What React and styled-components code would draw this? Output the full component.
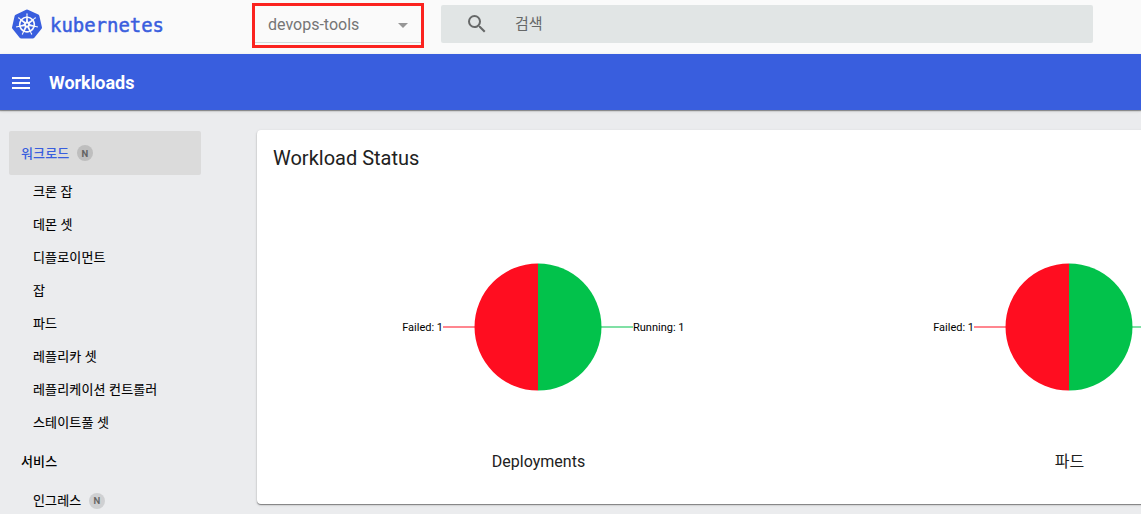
import React from 'react';
import styled, { createGlobalStyle } from 'styled-components';
import { SiKubernetes } from 'react-icons/si';
import { MdSearch, MdMenu, MdArrowDropDown } from 'react-icons/md';

const GlobalStyle = createGlobalStyle`
  * {
    box-sizing: border-box;
  }
  body {
    margin: 0;
    overflow: hidden;
    background: #ebecee;
    color: #000000;
    font-family: Roboto, "Noto Sans CJK KR", sans-serif;
  }
`;

const Page = styled.div`
  height: 514px;
  overflow: hidden;
`;

const Header = styled.header`
  display: flex;
  height: 54px;
  background: #fafafa;
`;

const Brand = styled.div`
  display: flex;
  width: 252px;
  padding: 9px 0 0 12px;
  color: #395ede;
`;

const Wordmark = styled.svg`
  width: 120px;
  height: 30px;
  margin-left: 8px;
  fill: #395ede;
  stroke: #395ede;
  stroke-width: 0.5px;
  font-family: "DejaVu Sans Mono", monospace;
  font-size: 19.5px;
`;

const Namespace = styled.div`
  display: flex;
  align-items: center;
  justify-content: space-between;
  width: 172px;
  height: 45px;
  margin-top: 3px;
  padding: 0 6px 2px 13px;
  border: 3px solid #fb231f;
  box-shadow: inset 0 -2px 0 #fafafa, inset 0 -3px 0 #d3dbdb;
  color: #757575;
  font-size: 16px;
`;

const Search = styled.div`
  display: flex;
  align-items: center;
  width: 652px;
  height: 38px;
  margin: 5px 0 0 17px;
  padding-left: 24px;
  border-radius: 2px;
  background: #e1e5e5;
  color: #666868;
  font-size: 15px;
`;

const Placeholder = styled.span`
  margin: 0 0 3px 26px;
`;

const ActionBar = styled.div`
  position: relative;
  display: flex;
  align-items: center;
  height: 56px;
  padding: 2px 0 0 9px;
  background: #395ede;
  box-shadow: 0 1px 1px rgba(0, 0, 0, 0.35), 0 1px 3px rgba(0, 0, 0, 0.15);
  color: #ffffff;
`;

const PageTitle = styled.h1`
  margin: 0 0 2px 16px;
  font-size: 18px;
  font-weight: 700;
  letter-spacing: -0.05px;
`;

const Body = styled.div`
  display: flex;
  align-items: flex-start;
`;

const Nav = styled.nav`
  flex: none;
  width: 257px;
  padding: 21px 0 0 9px;
  font-size: 13px;
  letter-spacing: 0.15px;
`;

const NavGroup = styled.div`
  display: flex;
  align-items: center;
  width: 192px;
  height: ${props => props.$active ? '44px' : '45px'};
  padding-left: 12px;
  border-radius: 2px;
  background: ${props => props.$active ? '#dbdbdb' : 'transparent'};
  color: ${props => props.$active ? '#395ede' : '#000000'};
  font-weight: 500;
`;

const NavItem = styled.div`
  display: flex;
  align-items: center;
  height: 33px;
  padding-left: 24px;
  -webkit-text-stroke: 0.1px;
`;

const NavLabel = styled.span`
  padding-bottom: 2px;
`;

const Badge = styled.span`
  display: flex;
  align-items: center;
  justify-content: center;
  width: 16px;
  height: 16px;
  margin-left: 7.5px;
  border-radius: 50%;
  background: ${props => props.$dark ? '#bebebe' : '#cfd0d2'};
  color: #626262;
  font-size: 9.5px;
  font-weight: ${props => props.$dark ? 700 : 500};
  letter-spacing: 0;
`;

const Card = styled.section`
  flex: none;
  width: 1100px;
  height: 374px;
  margin-top: 20px;
  padding: 16px;
  border-radius: 4px;
  background: #ffffff;
  box-shadow: 0 1px 1px rgba(0, 0, 0, 0.4), 0 1px 3px rgba(0, 0, 0, 0.16);
  color: #212121;
`;

const CardTitle = styled.h2`
  margin: 0;
  font-size: 20px;
  font-weight: 400;
  line-height: 24px;
`;

const Charts = styled.div`
  display: flex;
`;

const Chart = styled.div`
  display: flex;
  flex-direction: column;
  align-items: center;
  flex: none;
  width: 531px;
  padding-top: 82px;
`;

const Pie = styled.svg`
  width: 330px;
  height: 150px;
  font-size: 11px;
  fill: #000000;
`;

const ChartName = styled.div`
  margin-top: 48px;
  font-size: 16px;
  line-height: 24px;
`;

const workloads = [
  '크론 잡',
  '데몬 셋',
  '디플로이먼트',
  '잡',
  '파드',
  '레플리카 셋',
  '레플리케이션 컨트롤러',
  '스테이트풀 셋',
];

function StatusChart({ name }) {
  return (
    <Chart>
      <Pie viewBox="0 0 330 150">
        <path d="M69 75h32" stroke="#ff868f" strokeWidth="2" />
        <path d="M227 75h32" stroke="#80e0a5" strokeWidth="2" />
        <path d="M164 11.5a63.5 63.5 0 0 0 0 127z" fill="#ff0d20" />
        <path d="M164 11.5a63.5 63.5 0 0 1 0 127z" fill="#02c24b" />
        <text x="69" y="79" textAnchor="end">Failed: 1</text>
        <text x="259" y="79">Running: 1</text>
      </Pie>
      <ChartName>{name}</ChartName>
    </Chart>
  )
}

function App() {
  return (
    <Page>
      <GlobalStyle />
      <Header>
        <Brand>
          <SiKubernetes size={30} />
          <Wordmark viewBox="0 0 120 30">
            <text x="0" y="22.5" textLength="114" lengthAdjust="spacingAndGlyphs">kubernetes</text>
          </Wordmark>
        </Brand>
        <Namespace>
          devops-tools
          <MdArrowDropDown size={24} color="#969696" />
        </Namespace>
        <Search>
          <MdSearch size={24} />
          <Placeholder>검색</Placeholder>
        </Search>
      </Header>
      <ActionBar>
        <MdMenu size={24} />
        <PageTitle>Workloads</PageTitle>
      </ActionBar>
      <Body>
        <Nav>
          <NavGroup $active>
            <NavLabel>워크로드</NavLabel>
            <Badge $dark>N</Badge>
          </NavGroup>
          {workloads.map(item => <NavItem key={item}><NavLabel>{item}</NavLabel></NavItem>)}
          <NavGroup>
            <NavLabel>서비스</NavLabel>
          </NavGroup>
          <NavItem>
            <NavLabel>인그레스</NavLabel>
            <Badge>N</Badge>
          </NavItem>
        </Nav>
        <Card>
          <CardTitle>Workload Status</CardTitle>
          <Charts>
            <StatusChart name="Deployments" />
            <StatusChart name="파드" />
          </Charts>
        </Card>
      </Body>
    </Page>
  )
}

export default App;
